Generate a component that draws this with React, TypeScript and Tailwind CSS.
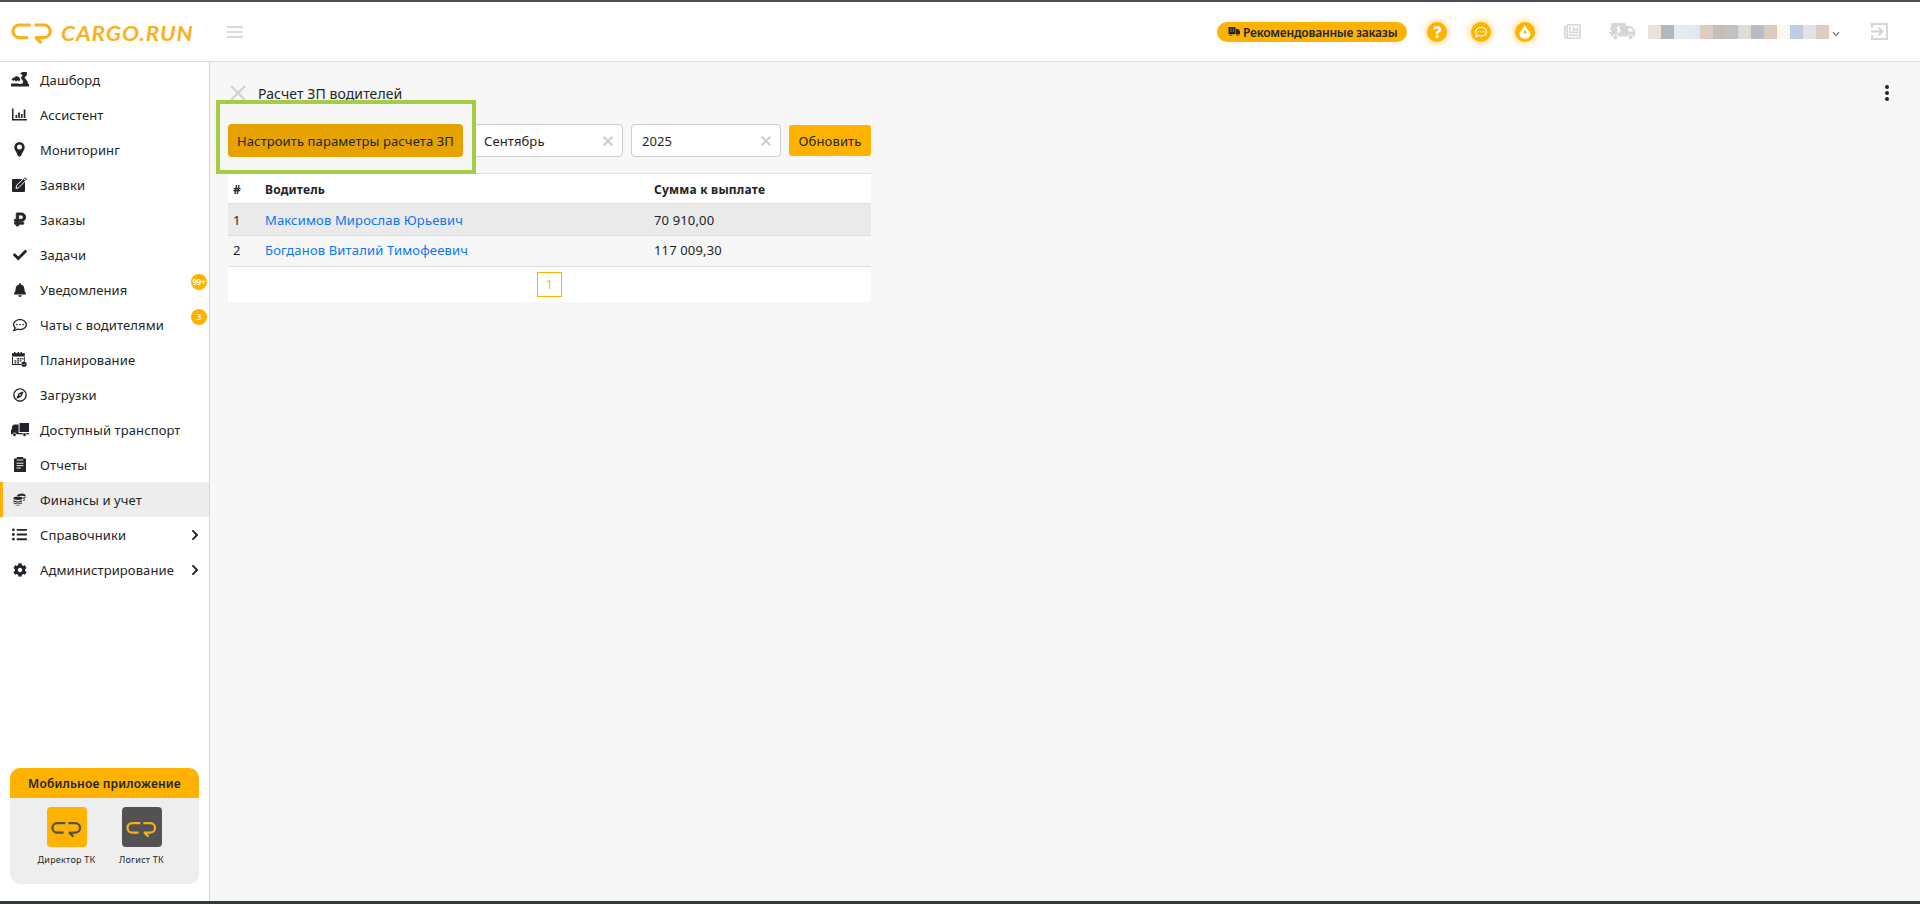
import type { ReactNode } from "react";
import clsx from "clsx";
import {
  FaBell,
  FaCheck,
  FaCog,
  FaChevronRight,
  FaChevronDown,
  FaListUl,
  FaQuestion,
  FaRegCommentDots,
  FaRegCompass,
  FaRubleSign,
} from "react-icons/fa";

function LogoMark({ className }: { className?: string }) {
  return (
    <svg viewBox="0 0 42 23" fill="none" stroke="currentColor" strokeWidth="3.1" strokeLinejoin="bevel" className={className}>
      <path d="M19.500 3H8.300a6.200 6.200 0 0 0 0 12.600H17" />
      <path d="M23.500 3H33a6.200 6.200 0 0 1 0 12.600H24.500L30.500 21.200" />
    </svg>
  );
}

function DashboardIcon() {
  return (
    <svg viewBox="0 0 18 15" className="w-[18px] h-[15px]" fill="currentColor">
      <path d="M.500 7.500Q2 5.500 3.500 5.200 5.500 3.500 8.200 5.300L9.300 7.500 8.200 9.500 6.500 8.200 5 9.800 4 8.300 2 8.800Z" />
      <path d="M9 1.500 11.500 0H15.800V3.300L13.500 5.600 16.800 10V11.500L18 12.200V14.500H9L6.500 12.500 11.500 11.500 12.300 9.500 9.800 6 11.600 3.200Z" />
      <path d="M.500 11.500H7.500L10 14.500H0V12.500Z" />
    </svg>
  );
}

function ChartIcon() {
  return (
    <svg viewBox="0 0 15 13" className="w-[15px] h-[13px]" fill="currentColor">
      <path d="M0 .500H1.500V11H15V12.500H0Z" />
      <path d="M3.500 7H5.200V10H3.500ZM6.200 4.500H7.900V10H6.200ZM8.900 6H10.600V10H8.900ZM11.700 1.500H13.400V10H11.700Z" />
    </svg>
  );
}

function PinIcon() {
  return (
    <svg viewBox="0 0 11 15" className="w-[11px] h-[15px]" fill="currentColor">
      <path
        fillRule="evenodd"
        d="M5.500 0A5.200 5.200 0 0 0 .3 5.200C.3 8 2.500 9.600 3.800 13.400 4.300 14.800 6.700 14.800 7.200 13.400 8.500 9.600 10.700 8 10.700 5.200A5.200 5.200 0 0 0 5.500 0ZM5.500 2.600A2.500 2.500 0 1 1 5.500 7.600 2.500 2.500 0 0 1 5.500 2.600Z"
      />
    </svg>
  );
}

function EditIcon() {
  return (
    <svg viewBox="0 0 15 15" className="w-[15px] h-[15px]">
      <rect x="0" y="2" width="13" height="13" rx="1" fill="currentColor" />
      <path d="M4 11.500 4.600 8.500 11.500 1.600 13.600 3.700 6.800 10.700Z" fill="currentColor" stroke="#fff" />
      <path d="M12.500.600 14.600 2.600" stroke="currentColor" strokeWidth="1.200" />
    </svg>
  );
}

function CalendarIcon() {
  return (
    <svg viewBox="0 0 15 15" className="w-[15px] h-[15px]" fill="currentColor">
      <path d="M0 1.300H2V0H3.500V1.300H5.500V0H7V1.300H8.500V0H10V1.300H12.800V4.500H0Z" />
      <path d="M0 5H1V12H9V13H0ZM12 5H12.800V9.500H12Z" />
      <path d="M5.200 6H7V7.500H5.200ZM7.700 6H9.400V7.500H7.700ZM10.200 6H11.500V7.500H10.200ZM2.500 8.200H4.300V9.500H2.500ZM5.200 8.200H7V9.500H5.200ZM7.700 8.200H9.400V9.500H7.700ZM2.500 10.200H4.300V11.400H2.500ZM5.200 10.200H7V11.400H5.200Z" />
      <circle cx="12" cy="12.200" r="2.600" />
      <path d="m10.900 12.200 .8.800 1.400-1.500" stroke="#fff" strokeWidth=".6" fill="none" />
    </svg>
  );
}

function TruckIcon() {
  return (
    <svg viewBox="0 0 18 14" className="w-[18px] h-[14px]" fill="currentColor">
      <path d="M8.500 0H18V9H8.500ZM3 1.500H7.600V10H18V11.200H0V7L1 6V3Z" />
      <circle cx="3.500" cy="11.700" r="1.800" stroke="#fff" strokeWidth=".7" />
      <circle cx="13.500" cy="11.700" r="1.800" stroke="#fff" strokeWidth=".7" />
    </svg>
  );
}

function ReportIcon() {
  return (
    <svg viewBox="0 0 12 15" className="w-[12px] h-[15px]">
      <path d="M0 1.500H2.800V0H9.200V1.500H12V15H0Z" fill="currentColor" />
      <path d="M2.800 3H9.200M2.500 6.200H9.500M2.500 8.600H9.500M2.500 11H7" stroke="#fff" strokeWidth=".9" />
    </svg>
  );
}

function CoinsIcon() {
  return (
    <svg viewBox="0 0 13 13" className="w-[13px] h-[13px]" fill="currentColor">
      <path d="M3.500 3Q5 .500 8.500.500T12.500 2.300V3.800Q11 2.600 8.500 2.800T3.500 3Z" />
      <ellipse cx="5" cy="5.200" rx="4.600" ry="1.700" />
      <path d="M.4 7.300Q5 9.500 9 7.300V8.500Q5 10.300.4 8.500ZM.6 9.500Q5 11.300 9 9.500V10.500Q5 12 .600 10.500ZM1.200 11.600Q5 12.700 8.400 11.600 5 13.700 1.200 11.600ZM10.200 4.600 12.400 4V5L10.200 6ZM10.200 7 12 6.200V7.200L10.200 8Z" />
    </svg>
  );
}

type MenuItem = {
  title: string;
  icon: ReactNode;
  badge?: string;
  active?: boolean;
  nested?: boolean;
};

const menu: MenuItem[] = [
  { title: "Дашборд", icon: <DashboardIcon /> },
  { title: "Ассистент", icon: <ChartIcon /> },
  { title: "Мониторинг", icon: <PinIcon /> },
  { title: "Заявки", icon: <EditIcon /> },
  { title: "Заказы", icon: <FaRubleSign className="w-[16px] h-[15px] stroke-[30] stroke-current" /> },
  { title: "Задачи", icon: <FaCheck className="w-[14px] h-[14px]" /> },
  { title: "Уведомления", icon: <FaBell className="w-[14px] h-[14px]" />, badge: "99+" },
  { title: "Чаты с водителями", icon: <FaRegCommentDots className="w-[14px] h-[14px]" />, badge: "3" },
  { title: "Планирование", icon: <CalendarIcon /> },
  { title: "Загрузки", icon: <FaRegCompass className="w-[14px] h-[14px]" /> },
  { title: "Доступный транспорт", icon: <TruckIcon /> },
  { title: "Отчеты", icon: <ReportIcon /> },
  { title: "Финансы и учет", icon: <CoinsIcon />, active: true },
  { title: "Справочники", icon: <FaListUl className="w-[15px] h-[15px]" />, nested: true },
  { title: "Администрирование", icon: <FaCog className="w-[14px] h-[14px]" />, nested: true },
];

const drivers = [
  { id: 1, name: "Максимов Мирослав Юрьевич", sum: "70 910,00" },
  { id: 2, name: "Богданов Виталий Тимофеевич", sum: "117 009,30" },
];

// Masked user name, one colour per block
const mask = [
  "bg-[#ebe2da]", "bg-[#aeb9be]", "bg-[#e6ebef]", "bg-[#e1e8f5]", "bg-[#e0cdc2]",
  "bg-[#c2beb6]", "bg-[#c0c1c0]", "bg-[#dfdcd5]", "bg-[#b7bcc9]", "bg-[#dccabf]",
  "bg-[#fcf7ec]", "bg-[#bccbe0]", "bg-[#e1e1e6]", "bg-[#dccdc5]",
];

function RoundButton({ children }: { children: ReactNode }) {
  return (
    <button className="w-5 h-5 rounded-full bg-[#ffb300] text-white flex items-center justify-center shadow-[0_0_8px_rgba(255,179,0,0.7)]">
      {children}
    </button>
  );
}

function Header() {
  return (
    <header className="h-[60px] shrink-0 bg-white border-b border-[#dedede] flex items-center pl-[11px]">
      <LogoMark className="w-[42px] h-[23px] text-[#fbb01f] mt-[3px]" />
      <span className="ml-2 w-[134px] mt-[2px] origin-left scale-x-[1.13] font-['Lato'] font-bold italic text-[20px] leading-5 tracking-[0.8px] text-[#fbb01f]">
        CARGO.RUN
      </span>
      <div className="ml-8 flex flex-col gap-[3px]">
        <i className="block w-4 h-[2px] bg-[#d9d9d9]" />
        <i className="block w-4 h-[2px] bg-[#d9d9d9]" />
        <i className="block w-4 h-[2px] bg-[#d9d9d9]" />
      </div>

      <button className="ml-[974px] w-[190px] h-5 rounded-full bg-[#ffb300] flex items-center pl-[11px] text-[#212529]">
        <svg viewBox="0 0 12 9" className="w-[12px] h-[9px] mr-[3px]" fill="currentColor">
          <path d="M.500 0H7.500V7.500H.500ZM8 2H10.500L12 4.500V7.500H8Z" />
          <circle cx="2.800" cy="7.500" r="1.300" />
          <circle cx="9.500" cy="7.500" r="1.300" />
          <path d="M3 1.500V5M5.300 1.500V5M1 7.500H11" stroke="#ffb300" strokeWidth=".6" />
        </svg>
        <span className="text-[12px] leading-5 font-semibold tracking-[-0.22px] whitespace-nowrap mt-[2px]">
          Рекомендованные заказы
        </span>
      </button>
      <div className="ml-5 flex gap-6">
        <RoundButton>
          <FaQuestion className="w-3 h-3" />
        </RoundButton>
        <RoundButton>
          <FaRegCommentDots className="w-3 h-3" />
        </RoundButton>
        <RoundButton>
          <svg viewBox="0 0 12 14" className="w-3 h-[14px]">
            <path
              d="M5 0C8.200 2 7.500 4 9 5.200 10.500 6.300 11.500 7.400 11.500 9A5.500 5 0 0 1 .500 9C.500 7 1.600 6 2.800 4.800 4 3.500 5 2.200 5 0Z"
              fill="currentColor"
            />
            <path d="M5.800 4.500C7.800 6 7.600 8.300 6.200 9.300 5 8.800 4.600 7.600 5 6.600 5.500 6 5.900 5.400 5.800 4.500Z" fill="#ffb300" />
          </svg>
        </RoundButton>
      </div>

      <svg viewBox="0 0 17 15" className="ml-[29px] w-[17px] h-[15px] text-[#d6d6d6]" fill="none" stroke="currentColor">
        <rect x="3.200" y=".8" width="13" height="13.400" rx="1" strokeWidth="1.600" />
        <path d="M3 2.500H.8V12.500Q.8 14.200 2.500 14.200H6" strokeWidth="1.500" />
        <path d="M6 3V8M9.500 2.500V8M13.500 2.500V8M9.500 5.500H13.500M5 8.500H14.500M5 11.200H14.500" strokeWidth="1.500" />
      </svg>
      <svg viewBox="0 0 27 17" className="ml-[28px] w-[27px] h-[17px] text-[#d6d6d6]" fill="currentColor">
        <path d="M3.500 0H15.500Q17 0 17 1.500V3H21.500Q25.500 5 26 8.500V13.500H2V10.500H0V9H2.500V7H.8V5.500H2V1.500Q2 0 3.500 0ZM19.500 5V8.500H24Q23.500 6 21.500 5Z" fillRule="evenodd" />
        <circle cx="6.500" cy="14.200" r="2.600" stroke="#fff" />
        <circle cx="21.500" cy="14.200" r="2.600" stroke="#fff" />
        <path d="M11.200 4H9.500Q8 4 8 5.200T9.600 6.400 11.200 7.600 9.800 8.900H7.800M9.600 2.700V10.200" fill="none" stroke="#fff" strokeWidth="1.100" />
      </svg>
      <div className="ml-3 flex w-[181px] h-[14px]">
        {mask.map((color, i) => (
          <i key={i} className={clsx("flex-1", color)} />
        ))}
      </div>
      <FaChevronDown className="ml-[3px] mt-[5px] w-2 h-2 text-[#777]" />
      <svg viewBox="0 0 17 17" className="ml-[31px] w-[17px] h-[17px] text-[#d6d6d6]" fill="none" stroke="currentColor" strokeWidth="1.900">
        <path d="M1 5V1H16V16H1V12M0 8.500H11M7.500 4.500 11.500 8.500 7.500 12.500" />
      </svg>
    </header>
  );
}

function AppTile({ title, dark }: { title: string; dark?: boolean }) {
  return (
    <div className="w-[75px] flex flex-col items-center">
      <div
        className={clsx(
          "w-10 h-10 rounded-[4px] flex items-center justify-center",
          dark ? "bg-[#525252] text-[#f8af12]" : "bg-[#ffb300] text-[#525252]",
        )}
      >
        <LogoMark className="w-[31px] h-[17px] mt-1" />
      </div>
      <span className="mt-[6px] text-[9px] leading-[14px] tracking-[0.25px] whitespace-nowrap text-[#212529]">{title}</span>
    </div>
  );
}

function Sidebar() {
  return (
    <aside className="w-[210px] shrink-0 bg-white border-r border-[#d5d5d5] flex flex-col justify-between">
      <nav>
        {menu.map((item) => (
          <a
            key={item.title}
            className={clsx(
              "relative h-[35px] flex items-center border-l-[3px]",
              item.active ? "bg-[#ededed] border-[#ffb300]" : "border-transparent",
            )}
          >
            <span className="ml-[6px] w-[21px] flex justify-center text-[#212529]">{item.icon}</span>
            <span className="ml-[10px] pt-[2px] text-[13px] tracking-[0.11px] whitespace-nowrap">{item.title}</span>
            {item.badge && (
              <span className="absolute left-[188px] top-[2px] w-4 h-4 rounded-full bg-[#ffb300] text-white text-[8px] font-semibold tracking-[-0.3px] flex items-center justify-center">
                {item.badge}
              </span>
            )}
            {item.nested && <FaChevronRight className="ml-auto mr-[9px] w-[10px] h-[12px]" />}
          </a>
        ))}
      </nav>
      <div className="ml-[10px] mb-[17px] w-[189px] h-[116px] rounded-[10px] overflow-hidden bg-[#eeeeee]">
        <div className="h-[30px] bg-[#ffb300] text-center text-[12px] leading-[32px] font-semibold tracking-[0.18px] whitespace-nowrap">
          Мобильное приложение
        </div>
        <div className="pt-[9px] pl-[19px] flex">
          <AppTile title="Директор ТК" />
          <AppTile title="Логист ТК" dark />
        </div>
      </div>
    </aside>
  );
}

function Cross({ className }: { className?: string }) {
  return (
    <svg viewBox="0 0 10 10" className={className} stroke="currentColor" fill="none">
      <path d="M.7.700 9.300 9.300M9.300.700.700 9.300" />
    </svg>
  );
}

function Select({ value }: { value: string }) {
  return (
    <div className="w-[150px] h-[33px] rounded-[4px] border border-[#cccccc] bg-white flex items-center justify-between pl-[10px] pr-[9px]">
      <span className="pt-[2px] text-[13px] tracking-[0.1px]">{value}</span>
      <Cross className="w-[10px] h-[10px] stroke-2 text-[#cccccc]" />
    </div>
  );
}

export default function App() {
  return (
    <div className="w-[1920px] h-[904px] flex flex-col overflow-hidden bg-[#f7f7f7] border-t-2 border-t-[#4c4957] border-b-[3px] border-b-[#373a3a] font-['Noto_Sans',sans-serif] text-[13px] text-[#212529]">
      <Header />
      <div className="flex-1 min-h-0 flex">
        <Sidebar />
        <main className="flex-1 relative pl-[18px] pt-[20px]">
          <div className="flex items-center h-5">
            <Cross className="ml-[2px] mt-px w-[16px] h-[16px] stroke-[1.5] text-[#d3d3d3]" />
            <h1 className="ml-3 mt-1 text-[14px] leading-5 tracking-[0.08px]">Расчет ЗП водителей</h1>
            <div className="ml-auto mr-[31px] mt-[2px] flex flex-col gap-[2px]">
              <i className="block w-1 h-1 rounded-full bg-[#212529]" />
              <i className="block w-1 h-1 rounded-full bg-[#212529]" />
              <i className="block w-1 h-1 rounded-full bg-[#212529]" />
            </div>
          </div>

          <div className="mt-[22px] h-[33px] flex items-center">
            <button className="w-[235px] h-[33px] rounded-[4px] bg-[#e6a200] pt-[2px] text-[13px] tracking-[0.1px] whitespace-nowrap">
              Настроить параметры расчета ЗП
            </button>
            <div className="ml-[10px] flex gap-2">
              <Select value="Сентябрь" />
              <Select value="2025" />
            </div>
            <button className="ml-2 w-[82px] h-[31px] rounded-[3px] bg-[#ffb300] pt-[2px] text-[13px] tracking-[0.15px]">
              Обновить
            </button>
          </div>

          <div className="mt-4 w-[643px]">
            <div className="h-[31px] border-y border-[#dedede] bg-white flex items-center pt-[2px] font-bold text-[12px] tracking-[0.2px]">
              <span className="w-[37px] pl-[5px]">#</span>
              <span className="w-[389px]">Водитель</span>
              <span>Сумма к выплате</span>
            </div>
            {drivers.map((driver, i) => (
              <div
                key={driver.id}
                className={clsx(
                  "border-b border-[#dedede] flex items-center tracking-[0.15px]",
                  i % 2 === 0 ? "h-8 pt-[2px] bg-[#eaeaea]" : "h-[31px] bg-[#f7f7f7]",
                )}
              >
                <span className="w-[37px] pl-[5px]">{driver.id}</span>
                <a className="w-[389px] text-[#0a76ee]">{driver.name}</a>
                <span>{driver.sum}</span>
              </div>
            ))}
            <div className="h-[35px] bg-white flex items-center justify-center">
              <span className="w-[25px] h-[25px] border border-[#ffb300] text-[#ffb300] text-[12px] flex items-center justify-center">
                1
              </span>
            </div>
          </div>

          <div className="absolute left-[6px] top-[38px] w-[260px] h-[74px] border-4 border-[#a4cc44] pointer-events-none" />
        </main>
      </div>
    </div>
  );
}
